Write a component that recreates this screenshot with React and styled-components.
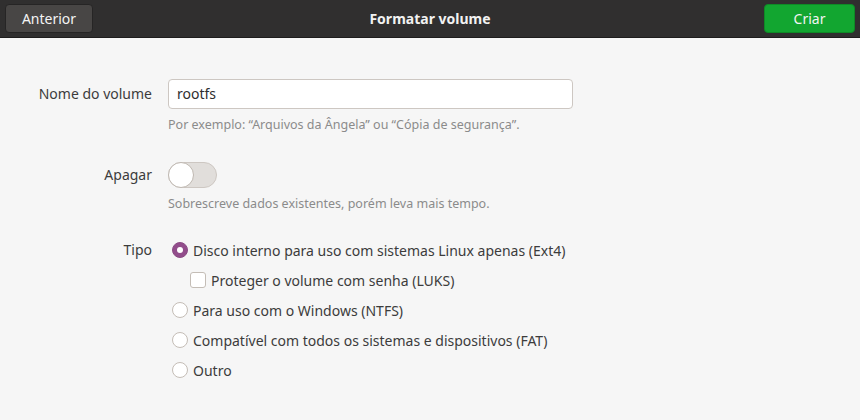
import React from "react";
import styled, { createGlobalStyle } from "styled-components";

const Global = createGlobalStyle`
  html, body { margin: 0; padding: 0; background: #f6f6f6; }
  body { font-family: "Noto Sans", "Open Sans", sans-serif; }
`;

const Window = styled.div`
  width: 860px;
  height: 420px;
  background: #f6f6f6;
  display: flex;
  flex-direction: column;
  overflow: hidden;
`;

const HeaderBar = styled.header`
  height: 38px;
  box-sizing: border-box;
  background: #302f2f;
  border-bottom: 1px solid #1e1d1d;
  display: grid;
  grid-template-columns: 1fr auto 1fr;
  align-items: center;
  padding: 0 5px;
`;

const HeaderButton = styled.button`
  justify-self: ${(p) => (p.$end ? "end" : "start")};
  height: 29px;
  min-width: ${(p) => p.$w}px;
  box-sizing: border-box;
  border-radius: 4px;
  border: 1px solid ${(p) => (p.$suggested ? "#0e8a26" : "#262525")};
  background: ${(p) => (p.$suggested ? "#12a630" : "#484645")};
  color: #f4f4f4;
  font-family: inherit;
  font-size: 14px;
  padding: 0 14px;
  margin-top: ${(p) => (p.$end ? "-1px" : "0")};
`;

const Title = styled.h1`
  margin: 0;
  font-size: 14px;
  font-weight: bold;
  color: #f2f2f2;
`;

const Form = styled.div`
  display: grid;
  grid-template-columns: 152px 1fr;
  column-gap: 16px;
  padding: 41px 0 0 0;
`;

const Label = styled.div`
  justify-self: end;
  color: #3c3c3c;
  font-size: 14px;
  line-height: 29px;
  margin-top: ${(p) => p.$mt || 0}px;
`;

const Field = styled.div`
  display: flex;
  flex-direction: column;
  align-items: flex-start;
  margin-top: ${(p) => p.$mt || 0}px;
`;

const TextInput = styled.div`
  width: 405px;
  height: 30px;
  box-sizing: border-box;
  background: #ffffff;
  border: 1px solid #cdc7c2;
  border-radius: 4px;
  font-size: 14px;
  color: #2e2e2e;
  padding: 0 8px;
  line-height: 28px;
`;

const Hint = styled.div`
  font-size: 12.5px;
  color: #8b8b8b;
  margin-top: 7px;
`;

const Switch = styled.div`
  width: 49px;
  height: 26px;
  box-sizing: border-box;
  border-radius: 13px;
  background: #e1dedb;
  border: 1px solid #cdc7c2;
  position: relative;
  margin-top: 2px;
`;

const Knob = styled.div`
  position: absolute;
  left: -1px;
  top: -1px;
  width: 26px;
  height: 26px;
  box-sizing: border-box;
  border-radius: 50%;
  background: #ffffff;
  border: 1px solid #bfb8b1;
`;

const OptionList = styled.div`
  display: flex;
  flex-direction: column;
`;

const Option = styled.label`
  display: flex;
  align-items: center;
  gap: 5px;
  height: 30px;
  font-size: 14px;
  color: #3c3c3c;
  padding-left: ${(p) => (p.$indent ? 22 : 4)}px;
`;

const Radio = styled.span`
  width: 16px;
  height: 16px;
  box-sizing: border-box;
  border-radius: 50%;
  border: 1px solid ${(p) => (p.$on ? "#8b4b84" : "#c4bdb6")};
  background: ${(p) => (p.$on ? "#924d8b" : "#ffffff")};
  display: flex;
  align-items: center;
  justify-content: center;
  flex: none;
  &::after {
    content: "";
    display: ${(p) => (p.$on ? "block" : "none")};
    width: 6px;
    height: 6px;
    border-radius: 50%;
    background: #ffffff;
  }
`;

const Check = styled.span`
  width: 16px;
  height: 16px;
  box-sizing: border-box;
  border-radius: 3px;
  border: 1px solid #c4bdb6;
  background: #ffffff;
  flex: none;
`;

export default function App() {
  return (
    <Window>
      <Global />
      <HeaderBar>
        <HeaderButton $w={88}>Anterior</HeaderButton>
        <Title>Formatar volume</Title>
        <HeaderButton $end $suggested $w={91}>Criar</HeaderButton>
      </HeaderBar>
      <Form>
        <Label>Nome do volume</Label>
        <Field>
          <TextInput>rootfs</TextInput>
          <Hint>Por exemplo: “Arquivos da Ângela” ou “Cópia de segurança”.</Hint>
        </Field>
        <Label $mt={27}>Apagar</Label>
        <Field $mt={27}>
          <Switch>
            <Knob />
          </Switch>
          <Hint>Sobrescreve dados existentes, porém leva mais tempo.</Hint>
        </Field>
        <Label $mt={23}>Tipo</Label>
        <Field $mt={23}>
          <OptionList>
            <Option>
              <Radio $on />
              Disco interno para uso com sistemas Linux apenas (Ext4)
            </Option>
            <Option $indent>
              <Check />
              Proteger o volume com senha (LUKS)
            </Option>
            <Option>
              <Radio />
              Para uso com o Windows (NTFS)
            </Option>
            <Option>
              <Radio />
              Compatível com todos os sistemas e dispositivos (FAT)
            </Option>
            <Option>
              <Radio />
              Outro
            </Option>
          </OptionList>
        </Field>
      </Form>
    </Window>
  );
}
